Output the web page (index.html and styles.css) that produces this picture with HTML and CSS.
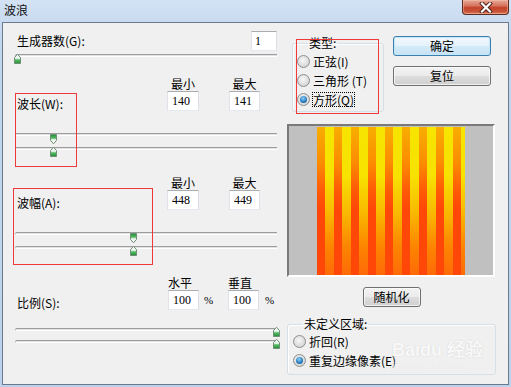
FILE: index.html
```html
<!DOCTYPE html>
<html lang="zh-CN">
<head>
    <meta charset="utf-8">
    <title>波浪</title>
    <link rel="stylesheet" href="styles.css">
</head>
<body>
    <svg class="defs" width="0" height="0" aria-hidden="true">
        <defs>
            <linearGradient id="thumbFill" x1="0" y1="0" x2="0" y2="1">
                <stop offset="0" stop-color="#ffffff"/>
                <stop offset="0.45" stop-color="#e6f2e8"/>
                <stop offset="0.6" stop-color="#58bd67"/>
                <stop offset="1" stop-color="#1d8c33"/>
            </linearGradient>
            <symbol id="thumb" viewBox="0 0 9 11">
                <path d="M1.5 10.5 V4.6 L4.5 1.2 L7.5 4.6 V10.5 Z" fill="url(#thumbFill)" stroke="#6f8f75"/>
            </symbol>
        </defs>
    </svg>

    <div class="window">
        <header class="titlebar">
            <span class="title">波浪</span>
            <button class="close" title="关闭">
                <svg width="14" height="11" viewBox="0 0 14 11">
                    <path d="M3 1.5 L11 9.5 M11 1.5 L3 9.5" stroke="#4a1f16" stroke-width="4" stroke-linecap="square"/>
                    <path d="M3 1.5 L11 9.5 M11 1.5 L3 9.5" stroke="#fff" stroke-width="2.2" stroke-linecap="square"/>
                </svg>
            </button>
        </header>

        <main class="client">
            <!-- 左侧：参数 -->
            <section class="left">
                <div class="count-row">
                    <label>生成器数(G):</label>
                    <input class="num count" value="1">
                </div>
                <div class="slider one">
                    <div class="track"></div>
                    <svg class="thumb" style="left:-2px"><use href="#thumb"/></svg>
                </div>

                <div class="section len">
                    <div class="param">
                        <span class="cap c2">最小</span>
                        <span class="cap c4">最大</span>
                        <label class="lbl">波长(W):</label>
                        <input class="num c2" value="140">
                        <input class="num c4" value="141">
                    </div>
                    <div class="slider pair">
                        <div class="track"></div>
                        <div class="track"></div>
                        <svg class="thumb down t1" style="left:34px"><use href="#thumb"/></svg>
                        <svg class="thumb t2" style="left:34px"><use href="#thumb"/></svg>
                    </div>
                    <div class="mark mark-len"></div>
                </div>

                <div class="section amp">
                    <div class="param">
                        <span class="cap c2">最小</span>
                        <span class="cap c4">最大</span>
                        <label class="lbl">波幅(A):</label>
                        <input class="num c2" value="448">
                        <input class="num c4" value="449">
                    </div>
                    <div class="slider pair">
                        <div class="track"></div>
                        <div class="track"></div>
                        <svg class="thumb down t1" style="left:114px"><use href="#thumb"/></svg>
                        <svg class="thumb t2" style="left:114px"><use href="#thumb"/></svg>
                    </div>
                    <div class="mark mark-amp"></div>
                </div>

                <div class="section scale">
                    <div class="param">
                        <span class="cap c2 left-cap">水平</span>
                        <span class="cap c4 left-cap">垂直</span>
                        <label class="lbl">比例(S):</label>
                        <input class="num c2" value="100">
                        <span class="pct c3">%</span>
                        <input class="num c4" value="100">
                        <span class="pct c5">%</span>
                    </div>
                    <div class="slider pair flat">
                        <div class="track"></div>
                        <div class="track"></div>
                        <svg class="thumb t1" style="left:257px"><use href="#thumb"/></svg>
                        <svg class="thumb t2" style="left:257px"><use href="#thumb"/></svg>
                    </div>
                </div>
            </section>

            <!-- 右侧：类型、按钮、预览 -->
            <section class="right">
                <div class="top-row">
                    <div class="type-wrap">
                        <fieldset class="group type">
                            <legend>类型:</legend>
                            <div class="radio-row"><span class="radio"></span><span>正弦(I)</span></div>
                            <div class="radio-row"><span class="radio"></span><span>三角形 (T)</span></div>
                            <div class="radio-row"><span class="radio on"></span><span class="focus">方形(Q)</span></div>
                        </fieldset>
                        <div class="mark mark-type"></div>
                    </div>
                    <div class="buttons">
                        <button class="btn default">确定</button>
                        <button class="btn">复位</button>
                    </div>
                </div>

                <div class="preview">
                    <div class="wave">
                        <span class="s a"></span><span class="s b"></span>
                        <span class="s a"></span><span class="s b"></span>
                        <span class="s a"></span><span class="s b"></span>
                        <span class="s a"></span><span class="s b"></span>
                        <span class="s a"></span><span class="s b"></span>
                        <span class="s a"></span><span class="s b"></span>
                        <span class="s a"></span><span class="s b"></span>
                        <span class="s a"></span><span class="s b"></span>
                        <span class="s a"></span><span class="s b end"></span>
                    </div>
                </div>

                <button class="btn random">随机化</button>

                <fieldset class="group undef">
                    <legend>未定义区域:</legend>
                    <div class="radio-row"><span class="radio"></span><span>折回(R)</span></div>
                    <div class="radio-row"><span class="radio on"></span><span>重复边缘像素(E)</span></div>
                </fieldset>
            </section>
        </main>

        <div class="watermark">
            <span class="wm-logo">Bai<span class="paw">du</span> 经验</span>
            <span class="wm-url">jingyan.baidu.com</span>
        </div>
    </div>
</body>
</html>
```

FILE: styles.css
```css
* {
    box-sizing: border-box;
}

body {
    margin: 0;
    font-family: "Noto Sans CJK SC", "Noto Sans", sans-serif;
    font-size: 12px;
    color: #000;
}

.defs {
    position: absolute;
}

/* 窗口外框 */
.window {
    position: relative;
    width: 511px;
    height: 387px;
    padding: 0 2px 2px 2px;
    background: linear-gradient(#d3e2f4, #c2d6ee 40px, #bcd1eb);
    overflow: hidden;
}

.titlebar {
    display: flex;
    justify-content: space-between;
    align-items: flex-start;
    height: 22px;
    margin: 0 -2px;
    padding-left: 4px;
}

.title {
    line-height: 14px;
    margin-top: 3px;
    font-size: 12px;
    color: #111;
}

.close {
    display: flex;
    align-items: center;
    justify-content: center;
    width: 47px;
    height: 15px;
    margin-right: 2px;
    padding: 0;
    border: 1px solid #5d2a1f;
    border-top: none;
    border-radius: 0 0 4px 4px;
    background: linear-gradient(#e6a898, #d87560 40%, #c2432a 55%, #c9553a 85%, #dd8a6a);
    box-shadow: inset 0 0 0 1px rgba(255, 200, 180, .45);
}

/* 客户区 */
.client {
    display: flex;
    height: 363px;
    border: 1px solid #6b7a8d;
    background: #f0f0f0;
}

.left {
    width: 262px;
    margin-left: 12px;
    padding-top: 8px;
}

.right {
    width: 209px;
    margin-left: 10px;
    padding-top: 13px;
}

/* 输入框 */
.num {
    width: 32px;
    height: 20px;
    padding: 0 0 0 4px;
    border: 1px solid;
    border-color: #abadb3 #dbdfe6 #e3e9ef #e2e3ea;
    background: #fff;
    font-family: "Liberation Serif", serif;
    font-size: 12px;
    color: #000;
}

.count-row {
    display: flex;
    justify-content: space-between;
    align-items: center;
    height: 20px;
    padding-left: 2px;
    line-height: 14px;
}

.num.count {
    width: 26px;
    padding-left: 3px;
}

/* 滑块 */
.slider {
    position: relative;
}

.slider.one {
    height: 10px;
    margin-top: 3px;
}

.track {
    height: 3px;
    margin-top: 3px;
    border-top: 1px solid #9d9d9d;
    border-bottom: 1px solid #fff;
    border-left: 1px solid #b8b8b8;
    border-radius: 2px 0 0 2px;
    background: #e2e2e2;
}

.thumb {
    position: absolute;
    top: -1px;
    width: 9px;
    height: 11px;
}

.thumb.down {
    transform: scaleY(-1);
}

.slider.pair {
    height: 24px;
    margin-top: 22px;
}

.slider.pair .track + .track {
    margin-top: 11px;
}

.slider.pair .t1 {
    top: 1px;
}

.slider.pair .t2 {
    top: 13px;
}

.slider.pair.flat {
    height: 22px;
    margin-top: 18px;
}

.slider.pair.flat .track + .track {
    margin-top: 9px;
}

.slider.pair.flat .t1 {
    top: -2px;
}

.slider.pair.flat .t2 {
    top: 10px;
}

/* 参数区 */
.section {
    position: relative;
}

.section.len {
    margin-top: 13px;
}

.section.amp {
    margin-top: 19px;
}

.section.scale {
    margin-top: 20px;
}

.param {
    display: grid;
    grid-template-columns: 152px 32px 30px 31px 1fr;
    grid-template-rows: 14px 20px;
}

.scale .param {
    grid-template-columns: 153px 31px 29px 31px 1fr;
}

.cap {
    grid-row: 1;
    line-height: 14px;
    text-align: center;
    white-space: nowrap;
}

.cap.left-cap {
    text-align: left;
}

.c2 {
    grid-column: 2;
}

.c3 {
    grid-column: 3;
}

.c4 {
    grid-column: 4;
}

.c5 {
    grid-column: 5;
}

.param .num {
    grid-row: 2;
    width: 100%;
}

.lbl {
    grid-row: 2;
    grid-column: 1;
    padding: 6px 0 0 2px;
    line-height: 14px;
}

.pct {
    grid-row: 2;
    padding-left: 5px;
    line-height: 20px;
    font-family: "Liberation Serif", serif;
    font-size: 11px;
}

.pct.c5 {
    padding-left: 6px;
}

/* 截图上的红色标注框 */
.mark {
    position: absolute;
    border: 1px solid #ee3a3a;
    pointer-events: none;
}

.mark-len {
    left: 0;
    top: 16px;
    width: 62px;
    height: 74px;
}

.mark-amp {
    left: -2px;
    top: 12px;
    width: 140px;
    height: 77px;
}

.mark-type {
    left: 4px;
    top: 2px;
    width: 83px;
    height: 75px;
}

/* 分组框 */
.group {
    margin: 0;
    border: 1px solid #d5dfe5;
    border-radius: 3px;
    min-width: 0;
    box-shadow: inset 1px 1px 0 #fff;
}

.group legend {
    padding: 0 1px;
    line-height: 12px;
}

.top-row {
    display: flex;
    align-items: flex-start;
}

.type-wrap {
    position: relative;
    width: 92px;
    margin: 1px 0 0 5px;
}

.group.type {
    height: 75px;
    padding: 3px 4px 2px 4px;
}

.group.type legend {
    margin-left: 11px;
}

.radio-row {
    display: flex;
    align-items: center;
    gap: 3px;
    height: 19px;
    white-space: nowrap;
    line-height: 14px;
}

.radio {
    position: relative;
    flex: none;
    width: 13px;
    height: 13px;
    border: 1px solid #8e8f8f;
    border-radius: 50%;
    background: radial-gradient(circle at 45% 40%, #f7f7f7, #dedede 55%, #c9c9c9);
}

.radio.on::after {
    content: "";
    position: absolute;
    inset: 2px;
    border-radius: 50%;
    background: radial-gradient(circle at 45% 35%, #8fd3f5, #2b7fc2 55%, #0d4a86);
}

.focus {
    line-height: 13px;
    outline: 1px dotted #000;
}

/* 按钮 */
.buttons {
    display: flex;
    flex-direction: column;
    gap: 10px;
    width: 98px;
    margin-left: 9px;
}

.btn {
    height: 20px;
    padding: 0;
    border: 1px solid #707070;
    border-radius: 3px;
    background: linear-gradient(#f2f2f2, #ebebeb 48%, #dddddd 52%, #cfcfcf);
    box-shadow: inset 0 0 0 1px rgba(255, 255, 255, .7);
    font-family: "Noto Sans CJK SC", sans-serif;
    font-size: 12px;
    line-height: 16px;
    color: #000;
}

.btn.default {
    border-color: #3c7fb1;
    background: linear-gradient(#f1f8fd, #e6f2fa 48%, #d4eaf7 52%, #c6e2f4);
    box-shadow: inset 0 0 0 1px #c3e6fa;
}

.btn.random {
    display: block;
    width: 58px;
    margin: 10px auto 0;
}

/* 预览 */
.preview {
    display: flex;
    justify-content: center;
    align-items: center;
    width: 208px;
    height: 153px;
    margin-top: 12px;
    border: 2px solid;
    border-color: #7a7a7a #fff #fff #7a7a7a;
    background: #c0c0c0;
}

.wave {
    display: flex;
    width: 148px;
    height: 148px;
}

.s {
    flex: none;
    height: 100%;
}

.s.a {
    width: 8px;
    background: linear-gradient(#f8ae00, #fc8c00 24%, #ff5c06 42%, #ff4807 55%, #ff4807);
}

.s.b {
    width: 9px;
    background: linear-gradient(#f7e400, #f7e200 33%, #f9b800 58%, #fd8600 80%, #ff6a08);
}

.s.b.end {
    width: 4px;
}

.group.undef {
    height: 57px;
    margin-top: 11px;
    padding: 2px 5px 4px 5px;
}

.group.undef legend {
    margin-left: 10px;
}

/* 水印 */
.watermark {
    position: absolute;
    left: 392px;
    top: 339px;
    display: flex;
    flex-direction: column;
    color: #fbfbfb;
    opacity: .8;
    pointer-events: none;
}

.wm-logo {
    font-family: "Liberation Sans", sans-serif;
    font-weight: bold;
    font-size: 18px;
    line-height: 22px;
    text-shadow: 0 0 1px #d4d4d4, 0 0 1px #d4d4d4;
}

.wm-url {
    font-family: "Liberation Sans", sans-serif;
    font-size: 10px;
    line-height: 12px;
    text-shadow: 0 0 1px #d4d4d4;
}
```
